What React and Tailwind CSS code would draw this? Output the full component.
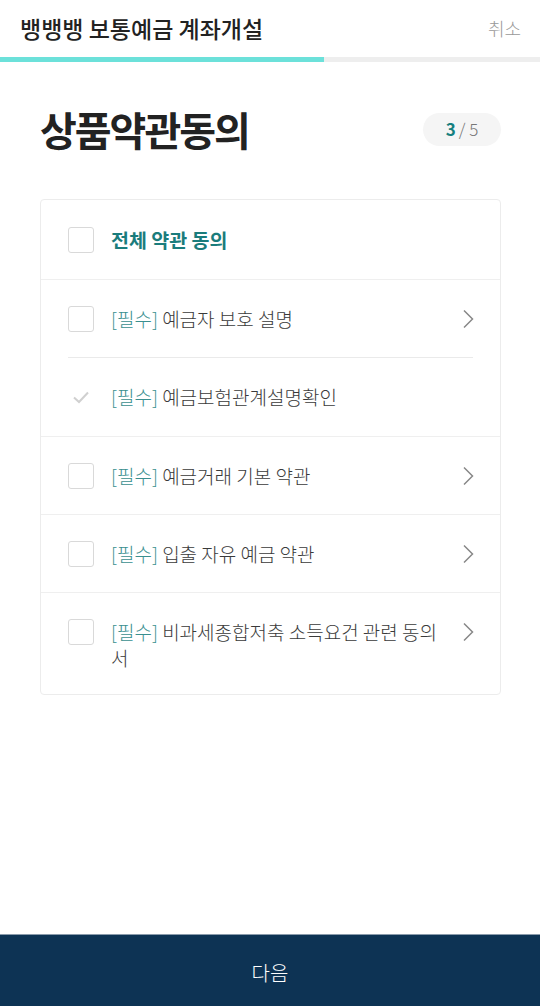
import React from "react";

const font = { fontFamily: '"Noto Sans CJK KR", "Noto Sans", sans-serif' };

function Box() {
  return <div className="w-[26px] h-[26px] shrink-0 border border-[#d9d9d9] rounded-[3px] bg-white" />;
}

function Chevron() {
  return (
    <svg width="14" height="20" viewBox="0 0 14 20" className="shrink-0">
      <path d="M4 1.5 L12.5 10 L4 18.5" fill="none" stroke="#888" strokeWidth="1.5" />
    </svg>
  );
}

function Check() {
  return (
    <svg width="26" height="26" viewBox="0 0 26 26" className="shrink-0">
      <path d="M6 13.5 L11 18 L20 8.5" fill="none" stroke="#d0d0d0" strokeWidth="2" />
    </svg>
  );
}

function Item({ icon, text, chevron = true, pad = "pt-[26px] pb-[25px]" }) {
  return (
    <div className={"flex items-start pl-[27px] pr-[26px] " + pad}>
      <div>{icon}</div>
      <div className="flex-1 ml-[17px] pr-[20px] text-[19px] leading-[26px] font-light text-[#3a3a3a]">
        <span className="text-[#3a8f8f]">[필수]</span> {text}
      </div>
      {chevron ? <div className="mt-[3px]"><Chevron /></div> : <div className="w-[14px]" />}
    </div>
  );
}

export default function App() {
  return (
    <div style={font} className="w-[540px] h-[1006px] bg-white flex flex-col">
      <div className="flex items-center justify-between h-[57px] pl-[20px] pr-[19px]">
        <div className="text-[23px] font-medium text-[#222]">뱅뱅뱅 보통예금 계좌개설</div>
        <div className="text-[18px] font-light text-[#999]">취소</div>
      </div>
      <div className="flex h-[5px] bg-[#eeeeee]">
        <div className="w-[324px] bg-[#6ce1da]" />
      </div>
      <div className="flex-1 px-[40px] pt-[39px]">
        <div className="flex items-center justify-between">
          <div className="text-[40px] leading-[56px] font-bold text-[#222] tracking-[-2px]">상품약관동의</div>
          <div className="flex items-center justify-center w-[78px] h-[33px] mr-[-1px] rounded-full bg-[#f5f5f5] text-[17px]">
            <span className="font-bold text-[#17807f]">3</span>
            <span className="font-light text-[#777] ml-[3px]">/ 5</span>
          </div>
        </div>
        <div className="mt-[42px] mr-[-1px] border border-[#ececec] rounded-[4px]">
          <div className="flex items-center px-[27px] h-[80px] border-b border-[#efefef]">
            <Box />
            <div className="ml-[17px] text-[19.5px] font-bold text-[#1a7c7c]">전체 약관 동의</div>
          </div>
          <div>
            <Item icon={<Box />} text="예금자 보호 설명" />
            <div className="mx-[27px] h-px bg-[#eaeaea]" />
            <Item icon={<Check />} text="예금보험관계설명확인" chevron={false} pad="pt-[26px] pb-[26px]" />
          </div>
          <div className="border-t border-[#efefef]">
            <Item icon={<Box />} text="예금거래 기본 약관" />
          </div>
          <div className="border-t border-[#efefef]">
            <Item icon={<Box />} text="입출 자유 예금 약관" />
          </div>
          <div className="border-t border-[#efefef]">
            <Item icon={<Box />} text="비과세종합저축 소득요건 관련 동의서" pad="pt-[26px] pb-[23px]" />
          </div>
        </div>
      </div>
      <div className="h-[72px] bg-[#0d3354] border-t border-[#8a9bab] flex items-center justify-center text-white text-[20px] font-light">
        <span className="mt-[4px]">다음</span>
      </div>
    </div>
  );
}
